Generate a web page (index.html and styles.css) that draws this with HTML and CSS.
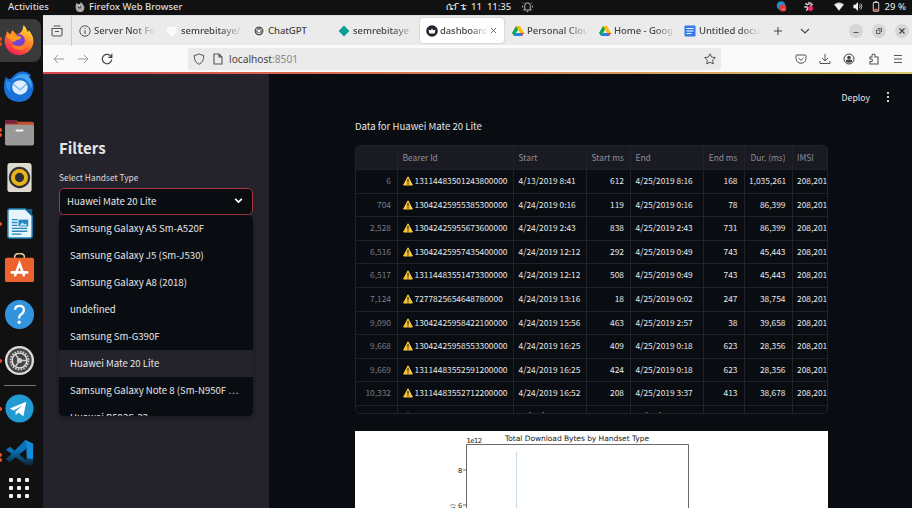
FILE: index.html
```html
<!DOCTYPE html>
<html lang="en">
<head>
<meta charset="utf-8">
<title>dashboard</title>
<link rel="stylesheet" href="styles.css">
</head>
<body>
<header class="topbar">
  <span class="activities">Activities</span>
  <svg class="app-icon" viewBox="0 0 12 12"><path d="M1 3 2 1l2 2 2-1 1-2 2 2 2 3c1 4-1 7-5 7S0 9 1 3z" fill="#aaa"/><circle cx="5.5" cy="6" r="2" fill="#555"/><path d="M3 3l4 1-2 2z" fill="#ddd"/></svg>
  <span class="app-name">Firefox Web Browser</span>
  <span class="clock"><span class="month">ሴፕቴ</span><span>11</span><span class="time">11:35</span></span>
  <svg class="bell" viewBox="0 0 12 12"><path d="M1.500 9.200h9M3 9V4.500a3 3 0 0 1 6 0V9M5 11h2M1.200 1.200l1 1M10.800 1.200l-1 1M.7 4.500v2M11.300 4.500v2" fill="none" stroke="#ddd" stroke-width=".9"/></svg>
  <div class="tray">
    <svg class="t1" viewBox="0 0 12 12"><circle cx="5" cy="5" r="4.7" fill="#238fce"/><rect x="3.5" y="4" width="7" height="7.5" rx="2.5" fill="#e23a35"/><path d="M6 9h3" stroke="#f9a19c"/></svg>
    <svg class="t2" viewBox="0 0 12 12"><path d="M2.500 3l2 1M6 1.500v2M9.500 3.500L8 5M1.500 6.500h2.500M3.500 10l1.200-2" stroke="#ddd" stroke-width="1.600" stroke-linecap="round"/><circle cx="7.7" cy="8" r="2.8" fill="#ed2470"/><circle cx="8" cy="2.500" r="1.100" fill="#e68aaa"/></svg>
    <svg class="t3" viewBox="0 0 12 12"><path d="M.7 3.800Q6-.5 11.300 3.800L6 10.500z" fill="#f2f2f2"/><path d="M1 4.600Q6 1 11 4.600" fill="none" stroke="#aaa" stroke-width=".6"/></svg>
    <svg class="t4" viewBox="0 0 12 12"><path d="M1 4h2l3-3v10L3 8H1z" fill="#eee"/><path d="M7.500 4q1.500 2 0 4M9 2.700q2.600 3.300 0 6.600" fill="none" stroke="#ccc"/></svg>
    <svg class="t5" viewBox="0 0 8 12"><rect x="1" y="1.700" width="6" height="9.500" rx="1" fill="none" stroke="#ccc" stroke-width="1.100"/><path d="M2.500.7h3" stroke="#ccc"/><path d="M2 8.500h4v2H2z" fill="#e86b35"/></svg>
    <span>29 %</span>
  </div>
</header>
<div class="desktop">
<nav class="dock">
  <div class="dock-item active two"><svg viewBox="0 0 30 30"><defs><linearGradient id="ff" x1=".8" y1="0" x2=".25" y2="1"><stop offset="0" stop-color="#ffe83e"/><stop offset=".45" stop-color="#ff8a25"/><stop offset="1" stop-color="#f5155d"/></linearGradient></defs><path d="M3 6l3 3 2-4 4 4q5-1 6-5l1-4q3 3 4 7l1-2q6 7 4 14c-2 6-7 10-14 10C5 29-1 20 1 12z" fill="url(#ff)"/><circle cx="14" cy="15" r="6.3" fill="#7542d1"/><path d="M2 10l7-1 5 2c3 0 3 2 1 3-4 0-4 3-7 2z" fill="#ff9d22"/><path d="M12 20q8 2 9-7 5 9-4 11-7 1-10-5z" fill="#ff7c26"/></svg></div>
  <div class="dock-item"><svg viewBox="0 0 32 32"><path d="M2 6Q5 11 9 6 15-1 23 1l5 3-2 2q6 7 4 14-2 11-14 12Q0 31 0 16q0-5 2-10z" fill="#186fd6"/><path d="M10 8Q16 1 25 4q5 8 3 14-3-10-11-11-5 0-9 4z" fill="#44a6f5"/><path d="M2 9q3 4 7 2-4 5-2 11-6-4-5-13z" fill="#2f8cec"/><ellipse cx="16.500" cy="17" rx="8" ry="7.500" fill="#dceeff"/><path d="M9.500 13.500l7 6 7-6" fill="none" stroke="#76b5ed" stroke-width="1.300"/></svg></div>
  <div class="dock-item two"><svg viewBox="0 0 32 32"><path d="M1 6q0-2 2-2h8q2 0 3 2h15q2 0 2 2v6H1z" fill="#c4512e"/><path d="M1 6q0-2 2-2h8l4 4H1z" fill="#762341"/><rect x="1" y="9" width="30" height="21.5" rx="2" fill="#999"/><rect x="12" y="14" width="8" height="2" rx=".5" fill="#f5f5f5"/></svg></div>
  <div class="dock-item"><svg viewBox="0 0 32 32"><rect x="3.5" y="1" width="25" height="30" rx="3" fill="#dedacf"/><circle cx="16" cy="16" r="11" fill="#303134"/><circle cx="16" cy="16" r="6.8" fill="none" stroke="#e7b51a" stroke-width="4"/><circle cx="16" cy="16" r="3" fill="#292c34"/></svg></div>
  <div class="dock-item one"><svg viewBox="0 0 32 32"><path d="M6 1h16l7 7v21q0 2-2 2H6q-2 0-2-2V3q0-2 2-2z" fill="#e9f5fc" stroke="#1c83bd" stroke-width="1.5"/><path d="M22 1h7v7z" fill="#145b89"/><path d="M8 12h6M8 15h6M8 18h6M8 21h16M8 24h16M8 27h10" stroke="#2589bf" stroke-width="1.4"/><rect x="15" y="12" width="10" height="7" fill="#2589bf"/><path d="M16 18l3-3 2 2 1-1 2 2z" fill="#d5efff"/></svg></div>
  <div class="dock-item"><svg viewBox="0 0 32 32"><path d="M11 7V4q0-3.500 5-3.500T21 4v3" fill="none" stroke="#e8ca8b" stroke-width="1.600"/><rect x="1" y="5" width="30" height="25" rx="2" fill="#ed6330"/><path d="M11.500 23l4.500-12 4.500 12M8 20h16" fill="none" stroke="#fff" stroke-width="2.600" stroke-linecap="round"/></svg></div>
  <div class="dock-item"><svg viewBox="0 0 32 32"><circle cx="16" cy="16" r="15" fill="#3294dd"/><path d="M11.500 11q0-4 4.500-4t4.500 4q0 3-3 5-2 1.300-2 4" fill="none" stroke="#fff" stroke-width="2.300"/><circle cx="15.600" cy="24" r="1.700" fill="#fff"/></svg></div>
  <div class="dock-item one"><svg viewBox="0 0 32 32"><circle cx="16" cy="16" r="15" fill="#ddd"/><circle cx="16" cy="16" r="12.600" fill="#454545"/><circle cx="16" cy="16" r="9.200" fill="none" stroke="#ccc" stroke-width="2" stroke-dasharray="1.700 1.200"/><circle cx="16" cy="16" r="7.600" fill="none" stroke="#ddd" stroke-width="1.500"/><circle cx="16" cy="16" r="2.700" fill="#ccc"/><path d="M16 16h7M16 16l-4-6M16 16l-4 6" stroke="#ccc" stroke-width="1.500"/></svg></div>
  <hr>
  <div class="dock-item one"><svg viewBox="0 0 32 32"><circle cx="16" cy="16" r="14.500" fill="#219bd3"/><path d="M6 16l17-7-3 15-5-4-3 3v-4l7-6-9 5z" fill="#fff"/></svg></div>
  <div class="dock-item two vscode"><svg viewBox="0 0 32 32"><defs><linearGradient id="vs" x2="0" y2="1"><stop offset=".4" stop-color="#0875b9"/><stop offset="1" stop-color="#0b2536"/></linearGradient></defs><path d="M22 2l8 4v22H23L2 12l4-3 17 14V11L6 25l-4-3z" fill="url(#vs)"/><path d="M22 2l8 4v16l-6-1V11z" fill="#168bd5"/></svg></div>
  <div class="apps"><i></i><i></i><i></i><i></i><i></i><i></i><i></i><i></i><i></i></div>
</nav>
<main class="window">
  <div class="tabs">
    <div class="recent"><svg viewBox="0 0 12 12"><path d="M2.500 1h7M1 3.500h10v6q0 1.500-1.500 1.500h-7Q1 11 1 9.500zM4 6.500h4" fill="none" stroke="#555" stroke-width="1.100"/></svg></div>
    <div class="tab"><svg viewBox="0 0 12 12"><circle cx="6" cy="6" r="5.200" fill="none" stroke="#555"/><path d="M6 5.300V9M6 3v1" stroke="#555" stroke-width="1.100"/></svg><span>Server Not Fo</span></div>
    <div class="tab"><svg viewBox="0 0 12 12"><path d="M4 11V9C1 9 1 7 1 5l1-4 2 1h4l2-1 1 4c0 3-1 4-3 4v2z" fill="#fafafa"/></svg><span>semrebitaye/</span></div>
    <div class="tab chat"><svg viewBox="0 0 12 12"><circle cx="6" cy="6" r="5.800" fill="#fafafa"/><circle cx="6" cy="6" r="3.800" fill="none" stroke="#555" stroke-width="1.400"/><path d="M4 3l4 2v4M8 3L4 5v4M3 6l3 2 3-2" fill="none" stroke="#555" stroke-width=".8"/></svg><span>ChatGPT</span></div>
    <div class="tab sem2"><svg viewBox="0 0 12 12"><path d="M6 .6L11.400 6 6 11.400.6 6z" fill="#0aa194"/></svg><span>semrebitaye</span></div>
    <div class="tab current"><svg viewBox="0 0 12 12"><circle cx="6" cy="6" r="5.800" fill="#20222c"/><path d="M2.500 4.500l2 1L6 3.500l1.500 2 2-1-.8 4H3.300z" fill="#fff"/></svg><span>dashboard</span><svg class="x" viewBox="0 0 8 8"><path d="M1 1l6 6M7 1L1 7" stroke="#444" stroke-width=".9"/></svg></div>
    <div class="tab cloud"><svg viewBox="0 0 12 12"><path d="M4 1h4l-4 7-2 3-2-3z" fill="#0ca454"/><path d="M4 1h4l4 7H8z" fill="#fcbc05"/><path d="M3.800 8H12l-2 3H2z" fill="#2c7de9"/><path d="M8.500 8H12l-2 3z" fill="#e94335"/></svg><span>Personal Clou</span></div>
    <div class="tab home"><svg viewBox="0 0 12 12"><path d="M4 1h4l-4 7-2 3-2-3z" fill="#0ca454"/><path d="M4 1h4l4 7H8z" fill="#fcbc05"/><path d="M3.800 8H12l-2 3H2z" fill="#2c7de9"/><path d="M8.500 8H12l-2 3z" fill="#e94335"/></svg><span>Home - Goog</span></div>
    <div class="tab doc"><svg viewBox="0 0 12 12"><rect x=".5" y=".5" width="11" height="11" rx="1" fill="#3579ee"/><path d="M2.500 3.500h7M2.500 6h7M2.500 8.500h5" stroke="#fff" stroke-width="1.200"/></svg><span>Untitled docu</span></div>
    <svg class="plus" viewBox="0 0 10 10"><path d="M5 1v8M1 5h8" stroke="#444"/></svg>
    <svg class="down" viewBox="0 0 10 10"><path d="M1 3l4 4 4-4" fill="none" stroke="#444" stroke-width="1.100"/></svg>
    <div class="controls"><i><svg viewBox="0 0 14 14"><path d="M4.500 8.500h5" stroke="#555"/></svg></i><i><svg viewBox="0 0 14 14"><path d="M4.500 6h3.500v3.500H4.500zM6 4.500h3.500V8" fill="none" stroke="#555" stroke-width=".9"/></svg></i><i><svg viewBox="0 0 14 14"><path d="M4.500 4.500l5 5M9.500 4.500l-5 5" stroke="#444" stroke-width="1.200"/></svg></i></div>
  </div>
  <div class="toolbar">
    <svg class="back" viewBox="0 0 12 12"><path d="M11 6H1M5 2L1 6l4 4" fill="none" stroke="#999"/></svg>
    <svg class="forward" viewBox="0 0 12 12"><path d="M1 6h10M7 2l4 4-4 4" fill="none" stroke="#999"/></svg>
    <svg class="reload" viewBox="0 0 12 12"><path d="M10.700 6.500A4.700 4.700 0 1 1 9 2.400L10.500 4M10.800.8V4.300H7.300" fill="none" stroke="#444" stroke-width="1.200"/></svg>
    <div class="url">
      <svg viewBox="0 0 12 12"><path d="M6 .8q2 1.500 4.700 1.500Q11 9 6 11.300 1 9 1.300 2.300 4 2.300 6 .8z" fill="none" stroke="#555"/></svg>
      <svg viewBox="0 0 12 12"><path d="M2 1h5l3 3v7H2zM7 1v3h3" fill="none" stroke="#555" stroke-width="1.100"/></svg>
      <span class="address">localhost<b>:8501</b></span>
      <svg class="star" viewBox="0 0 12 12"><path d="M6 .8l1.600 3.300 3.700.5-2.700 2.600.7 3.700L6 9.200l-3.300 1.700.7-3.700L.7 4.600l3.700-.5z" fill="none" stroke="#555"/></svg>
    </div>
    <div class="tools">
      <svg viewBox="0 0 12 12"><path d="M1.500 2h9q.5 0 .5 1v2.500Q10.500 10 6 10.300 1.500 10 1 5.500V3q0-1 .5-1zM3.500 5L6 7.300 8.500 5" fill="none" stroke="#555"/></svg>
      <svg viewBox="0 0 12 12"><path d="M6 .8v7M3 5l3 3 3-3M1 8v2.500h10V8" fill="none" stroke="#555"/></svg>
      <svg viewBox="0 0 12 12"><circle cx="6" cy="6" r="5" fill="none" stroke="#444"/><circle cx="6" cy="4.500" r="1.800" fill="#444"/><path d="M2.700 8.500q0-2 2-2h2.600q2 0 2 2Q6 11 2.700 8.500z" fill="#444"/></svg>
      <svg viewBox="0 0 12 12"><path d="M2 4h2V2.500a1.500 1.500 0 0 1 3 0V4h3v7H2V8.500h1.200a1.200 1.200 0 0 0 0-2.500H2z" fill="none" stroke="#555" stroke-width="1.100"/></svg>
      <svg viewBox="0 0 12 12"><path d="M2 2.500h8M2 6h8M2 9.500h8" stroke="#555"/></svg>
    </div>
  </div>
  <div class="decoration"></div>
  <div class="page">
    <aside>
      <h1>Filters</h1>
      <label>Select Handset Type</label>
      <div class="select"><span>Huawei Mate 20 Lite</span><svg viewBox="0 0 10 10"><path d="M2 3.500l3 3 3-3" fill="none" stroke="#fff" stroke-width="1.500"/></svg>
        <ul>
          <li>Samsung Galaxy A5 Sm-A520F</li><li>Samsung Galaxy J5 (Sm-J530)</li><li>Samsung Galaxy A8 (2018)</li><li>undefined</li><li>Samsung Sm-G390F</li><li class="selected">Huawei Mate 20 Lite</li><li>Samsung Galaxy Note 8 (Sm-N950F …</li><li>Huawei B593S-22</li>
        </ul>
      </div>
    </aside>
    <section>
      <div class="deploy"><span>Deploy</span><svg viewBox="0 0 4 12"><circle cx="2" cy="2" r="1.100" fill="#fff"/><circle cx="2" cy="6" r="1.100" fill="#fff"/><circle cx="2" cy="10" r="1.100" fill="#fff"/></svg></div>
      <p>Data for Huawei Mate 20 Lite</p>
      <svg class="defs" width="0" height="0"><symbol id="warn" viewBox="0 0 10 10"><path d="M5 .8L9.400 9H.6z" fill="#fac536" stroke="#fac536" stroke-linejoin="round"/><path d="M5 3v3.400M5 7.300v1.200" stroke="#2b261c" stroke-width="1.200"/></symbol></svg>
      <div class="table">
        <div class="row head"><span></span><span>Bearer Id</span><span>Start</span><span>Start ms</span><span>End</span><span>End ms</span><span>Dur. (ms)</span><span>IMSI</span></div>
        <div class="row"><span>6</span><span><svg><use href="#warn"/></svg>13114483501243800000</span><span>4/13/2019 8:41</span><span>612</span><span>4/25/2019 8:16</span><span>168</span><span>1,035,261</span><span>208,201</span></div>
        <div class="row"><span>704</span><span><svg><use href="#warn"/></svg>13042425955385300000</span><span>4/24/2019 0:16</span><span>119</span><span>4/25/2019 0:16</span><span>78</span><span>86,399</span><span>208,201</span></div>
        <div class="row"><span>2,528</span><span><svg><use href="#warn"/></svg>13042425955673600000</span><span>4/24/2019 2:43</span><span>838</span><span>4/25/2019 2:43</span><span>731</span><span>86,399</span><span>208,201</span></div>
        <div class="row"><span>6,516</span><span><svg><use href="#warn"/></svg>13042425957435400000</span><span>4/24/2019 12:12</span><span>292</span><span>4/25/2019 0:49</span><span>743</span><span>45,443</span><span>208,201</span></div>
        <div class="row"><span>6,517</span><span><svg><use href="#warn"/></svg>13114483551473300000</span><span>4/24/2019 12:12</span><span>508</span><span>4/25/2019 0:49</span><span>743</span><span>45,443</span><span>208,201</span></div>
        <div class="row"><span>7,124</span><span><svg><use href="#warn"/></svg>7277825654648780000</span><span>4/24/2019 13:16</span><span>18</span><span>4/25/2019 0:02</span><span>247</span><span>38,754</span><span>208,201</span></div>
        <div class="row"><span>9,090</span><span><svg><use href="#warn"/></svg>13042425958422100000</span><span>4/24/2019 15:56</span><span>463</span><span>4/25/2019 2:57</span><span>38</span><span>39,658</span><span>208,201</span></div>
        <div class="row"><span>9,668</span><span><svg><use href="#warn"/></svg>13042425958553300000</span><span>4/24/2019 16:25</span><span>409</span><span>4/25/2019 0:18</span><span>623</span><span>28,356</span><span>208,201</span></div>
        <div class="row"><span>9,669</span><span><svg><use href="#warn"/></svg>13114483552591200000</span><span>4/24/2019 16:25</span><span>424</span><span>4/25/2019 0:18</span><span>623</span><span>28,356</span><span>208,201</span></div>
        <div class="row"><span>10,332</span><span><svg><use href="#warn"/></svg>13114483552712200000</span><span>4/24/2019 16:52</span><span>208</span><span>4/25/2019 3:37</span><span>413</span><span>38,678</span><span>208,201</span></div>
        <div class="row last"><span></span><span><svg><use href="#warn"/></svg></span><span class="peek">/ /</span><span></span><span class="peek">/ /</span><span></span><span></span><span></span></div>
      </div>
      <svg class="chart" viewBox="0 0 473 77"><rect width="473" height="77" fill="#fff"/><path d="M111.500 80V13.500h222V80M108 39h3.500M108 74h3.500" fill="none" stroke="#444" stroke-width=".8"/><path d="M161.500 21v60" stroke="#cbd9e4"/><text x="150" y="10" textLength="144" class="ctitle">Total Download Bytes by Handset Type</text><text x="111.500" y="12" textLength="15.500">1e12</text><text x="103" y="41.500">8</text><text x="103" y="76.500">6</text><text transform="translate(99.500 79) rotate(-90)">s)</text></svg>
    </section>
  </div>
</main>
</div>
</body>
</html>
```
FILE: styles.css
```css
* { box-sizing: border-box; }
body { margin: 0; width: 912px; height: 508px; overflow: hidden; background: #111; font: 9.5px "Noto Sans", sans-serif; }
svg { display: block; flex: none; }
.topbar { height: 15px; display: flex; align-items: center; color: #ddd; font-size: 9.5px; font-weight: 500; line-height: 13px; padding: 0 0 2px 8px; background: #111; white-space: nowrap; }
.activities { width: 67px; }
.app-icon { width: 10px; height: 10px; margin-right: 4px; }
.app-name { width: 357px; }
.clock { display: flex; width: 76px; }
.month { width: 25px; font-size: 9.5px; letter-spacing: .3px; }
.time { margin-left: 5px; }
.bell { width: 11px; height: 12px; }
.tray { display: flex; align-items: center; margin-left: auto; padding-right: 6px; }
.tray svg { width: 12px; height: 11px; }
.tray .t1 { margin-right: 15px; }
.tray .t2 { margin-right: 18px; }
.tray .t3 { margin-right: 7px; }
.tray .t4 { margin-right: 8px; }
.tray .t5 { width: 8px; margin-right: 5px; }
.desktop { display: flex; height: 493px; }
.dock { width: 43px; padding-top: 4px; background: #111; }
.dock-item { height: 43px; margin-bottom: 2.7px; width: 41px; display: flex; align-items: center; padding-left: 4px; border-radius: 0 8px 8px 0; position: relative; }
.dock-item.active { background: #3a3a3a; }
.dock-item svg { width: 31px; height: 31px; }
.dock-item.vscode { height: 38px; margin-top: 5px; margin-bottom: 0; }
.one::before, .two::before { content: ""; position: absolute; left: -2px; top: 20px; width: 4px; height: 4px; border-radius: 2px; background: #e95420; }
.two::before { top: 18px; box-shadow: 0 5px #e95420; }
.dock hr { border: 0; height: 1px; margin: 0 7px 1px 4px; background: #777; }
.apps { display: grid; grid-template-columns: repeat(3, 4px); gap: 4px; padding: 5px 0 0 9px; }
.apps i { height: 4px; background: #f0f0f0; border-radius: 1px; }
.window { width: 869px; background: #090d12; overflow: hidden; }
.tabs { height: 30px; display: flex; align-items: center; background: #ebebeb; color: #444; border-top: 1px solid #ddd; }
.recent { width: 29px; height: 30px; padding: 9px 0 0 8px; border-right: 1px solid #ccc; }
.recent svg { width: 12px; height: 12px; }
.tab { width: 87px; height: 25px; display: flex; align-items: center; padding-left: 7px; }
.tab svg { width: 12px; height: 12px; margin-right: 3px; }
.tab span { width: 62px; white-space: nowrap; font-weight: 500; letter-spacing: -.05px; -webkit-mask-image: linear-gradient(90deg, #000 65%, transparent); mask-image: linear-gradient(90deg, #000 65%, transparent); }
.tab.chat span { mask-image: none; -webkit-mask-image: none; }
.tab.sem2 { width: 86px; padding-left: 5px; }
.tab.current { width: 84px; background: #fff; border-radius: 3px; box-shadow: 0 0 2px #aaa; padding-left: 6px; margin: 0 1px; }
.tab.current span { width: 48px; letter-spacing: -.1px; }
.tab.current svg { margin-right: 2px; }
.tab.current .x { width: 7px; height: 7px; margin: 0 0 0 2px; }
.tab.doc { width: 94px; padding-left: 5px; }
.plus { width: 10px; height: 10px; }
.down { width: 10px; height: 10px; margin-left: 17px; }
.controls { display: flex; gap: 9px; margin-left: auto; padding-right: 3px; }
.controls i { width: 14px; height: 14px; background: #d6d6d6; border-radius: 50%; }
.toolbar { height: 27px; display: flex; align-items: center; padding-left: 10px; background: #fafafa; color: #444; }
.toolbar svg { width: 12px; height: 12px; }
.forward { margin-left: 12px; }
.reload { margin-left: 12px; }
.toolbar .url { width: 533px; height: 22px; margin-left: 75px; display: flex; align-items: center; background: #ebebeb; border-radius: 3px; padding: 0 5px; }
.url svg + svg { margin-left: 7px; }
.address { margin-left: 5px; font-size: 10.2px; }
.address b { color: #888; font-weight: 400; }
.url .star { margin-left: auto; }
.tools { display: flex; gap: 12.3px; margin-left: auto; padding-right: 8px; }
.decoration { height: 2px; background: linear-gradient(90deg, #d94550, #d96c4e 35%, #d4a25e 75%, #d5ca65); }
.page { display: flex; height: 434px; color: #e6e6e8; font-family: "Noto Sans CJK SC", sans-serif; }
aside { width: 226px; padding: 63px 16px 0; background: #24232c; }
h1 { font-size: 15px; line-height: 22px; font-weight: 600; margin: 0 0 12px; }
label { display: block; font-size: 8.4px; line-height: 13px; height: 17px; color: #ddd; }
.select { position: relative; width: 194px; height: 27px; border: 1px solid #a9363d; border-radius: 5px; background: #090d12; display: flex; align-items: center; justify-content: space-between; padding: 0 8px 2px 7px; font-size: 9.6px; }
.select > svg { width: 11px; height: 11px; }
.select ul { position: absolute; left: -1px; top: 26px; width: 194px; height: 201px; margin: 0; padding: 0; list-style: none; overflow: hidden; background: #090d12; border-radius: 5px; box-shadow: 0 2px 5px #1118; }
.select li { height: 27px; line-height: 27px; padding-left: 11px; white-space: nowrap; }
.select .selected { background: #24232c; }
section { width: 643px; padding: 16px 84px 0 86px; }
.deploy { display: flex; height: 14px; align-items: center; justify-content: flex-end; margin-right: -62px; font-size: 8.7px; gap: 16px; }
.deploy svg { width: 4px; height: 12px; }
section p { margin: 15px 0 11px; height: 15px; line-height: 15px; font-size: 9.6px; }
.defs { position: absolute; }
.table { width: 473px; height: 269px; overflow: hidden; border: 1px solid #20212a; border-radius: 5px; font-size: 8.4px; }
.row { display: grid; grid-template-columns: 42px 116px 73px 44px 73px 40.5px 48px 1fr; height: 23.6px; line-height: 20px; border-bottom: 1px solid #20212a; }
.row > span { padding: 0 6px 0 4.5px; border-right: 1px solid #20212a; overflow: hidden; white-space: nowrap; text-align: right; }
.row > span:nth-child(2) { display: flex; align-items: flex-start; }
.row > span:nth-child(3), .row > span:nth-child(5), .row > span:nth-child(8) { text-align: left; }
.row > span:nth-child(8) { padding-right: 0; border-right: 0; }
.row > span:first-child { color: #777a80; }
.row svg { width: 10px; height: 10px; margin: 6px 2px 0 0; }
.row.head { background: #1a1a23; color: #8e8f97; height: 24px; line-height: 22px; }
.row.last svg { margin-top: 6px; }
.row.last .peek { padding-left: 13px; line-height: 18px; word-spacing: 8px; }
.chart { width: 473px; height: 77px; margin-top: 17px; font: 6.8px "DejaVu Sans", sans-serif; fill: #222; }
.ctitle { font-size: 7.5px; }
```
